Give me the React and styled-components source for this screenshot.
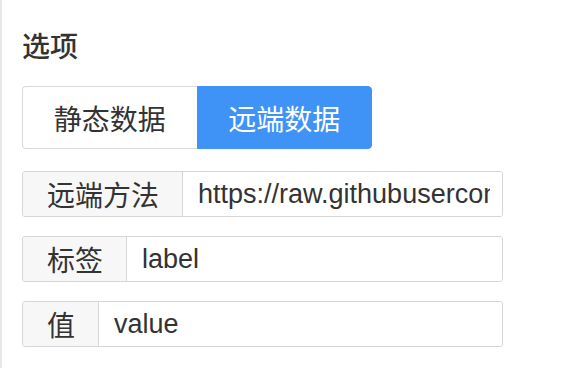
import React from "react";
import styled, { createGlobalStyle } from "styled-components";

const GlobalStyle = createGlobalStyle`
  body {
    margin: 0;
    background: #fff;
    font-family: "Liberation Sans", "Noto Sans CJK SC", sans-serif;
    color: #333;
  }
`;

const Panel = styled.div`
  height: 368px;
  box-sizing: border-box;
  border-left: 2px solid #e8e8e8;
  padding: 28px 0 0 20px;
  width: 503px;
`;

const Title = styled.div`
  font-size: 28px;
  line-height: 40px;
  font-weight: 500;
  color: #333;
  margin-bottom: 18px;
`;

const Segment = styled.div`
  display: flex;
  width: 350px;
  height: 63px;
  margin-bottom: 22px;
`;

const SegButton = styled.button`
  flex: 1;
  font-family: inherit;
  font-size: 28px;
  cursor: pointer;
  border: 1px solid ${(p) => (p.active ? "#3f93f6" : "#d9d9d9")};
  background: ${(p) => (p.active ? "#3f93f6" : "#fff")};
  color: ${(p) => (p.active ? "#fff" : "#333")};
  border-radius: ${(p) => (p.active ? "0 4px 4px 0" : "4px 0 0 4px")};
  border-right-width: ${(p) => (p.active ? "1px" : "0")};
  padding: 0;
`;

const Fields = styled.div`
  display: flex;
  flex-direction: column;
  gap: 19px;
`;

const Row = styled.div`
  display: flex;
  height: 46px;
  box-sizing: border-box;
  border: 1px solid #d6d6d6;
  border-radius: 3px;
  overflow: hidden;
`;

const Addon = styled.span`
  display: flex;
  align-items: center;
  padding: 0 23px 0 24px;
  background: #f7f7f7;
  border-right: 1px solid #d6d6d6;
  font-size: 28px;
  color: #333;
  white-space: nowrap;
`;

const Input = styled.input`
  flex: 1;
  min-width: 0;
  border: none;
  outline: none;
  padding: 0 12px 0 15px;
  font-family: inherit;
  font-size: 27px;
  color: #333;
  background: #fff;
`;

const fields = [
  { label: "远端方法", value: "https://raw.githubusercontent.com/options.json" },
  { label: "标签", value: "label" },
  { label: "值", value: "value" },
];

export default function App() {
  return (
    <>
      <GlobalStyle />
      <Panel>
        <Title>选项</Title>
        <Segment>
          <SegButton>静态数据</SegButton>
          <SegButton active>远端数据</SegButton>
        </Segment>
        <Fields>
          {fields.map((f) => (
            <Row key={f.label}>
              <Addon>{f.label}</Addon>
              <Input value={f.value} readOnly />
            </Row>
          ))}
        </Fields>
      </Panel>
    </>
  );
}
